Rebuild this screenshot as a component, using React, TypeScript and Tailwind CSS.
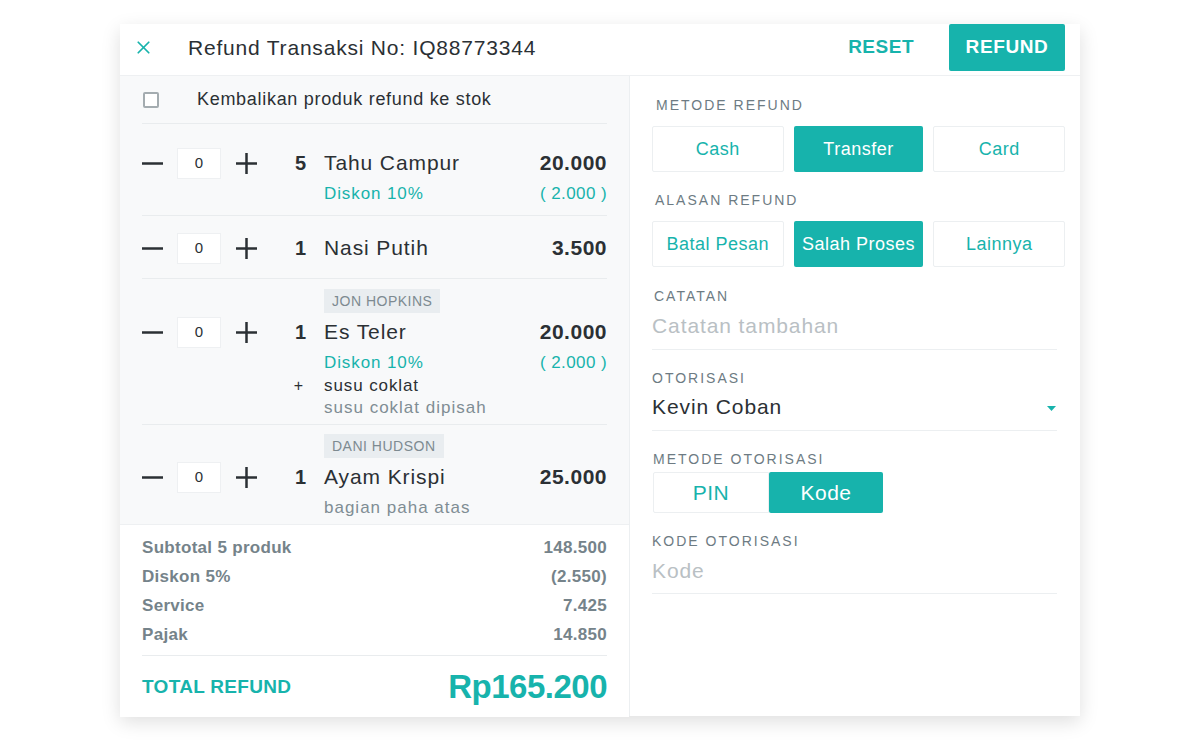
import { X } from 'lucide-react';

const teal = 'text-[#17b3ac]';

type Item = {
    tag?: string;
    qty: number;
    name: string;
    price: string;
    discount?: string;
    addon?: string;
    notes?: string;
    pt: string;
    pb: string;
};

const items: Item[] = [
    { qty: 5, name: 'Tahu Campur', price: '20.000', discount: '( 2.000 )', pt: 'pt-[23px]', pb: 'pb-[9px]' },
    { qty: 1, name: 'Nasi Putih', price: '3.500', pt: 'pt-[16px]', pb: 'pb-[14px]' },
    {
        tag: 'JON HOPKINS',
        qty: 1,
        name: 'Es Teler',
        price: '20.000',
        discount: '( 2.000 )',
        addon: 'susu coklat',
        notes: 'susu coklat dipisah',
        pt: 'pt-[10px]',
        pb: 'pb-[5px]',
    },
    {
        tag: 'DANI HUDSON',
        qty: 1,
        name: 'Ayam Krispi',
        price: '25.000',
        notes: 'bagian paha atas',
        pt: 'pt-[9px]',
        pb: 'pb-[5px]',
    },
];

function Minus() {
    return (
        <svg width="21" height="21" viewBox="0 0 21 21">
            <rect x="0" y="9.25" width="21" height="2.5" fill="#2b3034" />
        </svg>
    );
}

function Plus() {
    return (
        <svg width="21" height="21" viewBox="0 0 21 21">
            <rect x="0" y="9.25" width="21" height="2.5" fill="#2b3034" />
            <rect x="9.25" y="0" width="2.5" height="21" fill="#2b3034" />
        </svg>
    );
}

function ItemRow({ item, last }: { item: Item; last: boolean }) {
    return (
        <div className={`${item.pt} ${item.pb} ${last ? '' : 'border-b border-[#e9ecee]'}`}>
            {item.tag && (
                <div className="flex mb-[3px]">
                    <div className="w-[182px] shrink-0" />
                    <span className="bg-[#e9edf0] text-[#7d8a91] text-[14px] tracking-[0.5px] leading-[24px] px-[8px]">
                        {item.tag}
                    </span>
                </div>
            )}
            <div className="flex items-center h-[32px]">
                <div className="flex items-center w-[164px] shrink-0">
                    <Minus />
                    <div className="ml-[14px] w-[44px] h-[31px] bg-white border border-[#eef0f2] flex items-center justify-center text-[15px] text-[#2b3034]">
                        0
                    </div>
                    <div className="ml-[15px]">
                        <Plus />
                    </div>
                    <span className="ml-auto text-[20px] font-bold text-[#2b3034]">{item.qty}</span>
                </div>
                <span className="ml-[18px] text-[21px] tracking-[0.9px] text-[#2b3034]">{item.name}</span>
                <span className="ml-auto text-[21px] font-bold tracking-[0.5px] text-[#2b3034]">{item.price}</span>
            </div>
            {item.discount && (
                <div className={`flex items-center h-[24px] mt-[3px] text-[17px] tracking-[0.9px] ${teal}`}>
                    <div className="w-[182px] shrink-0" />
                    <span>Diskon 10%</span>
                    <span className="ml-auto tracking-[0.4px]">{item.discount}</span>
                </div>
            )}
            {item.addon && (
                <div className="flex items-center h-[22px] text-[17px] tracking-[0.9px] text-[#2b3034]">
                    <div className="w-[164px] shrink-0 text-right text-[16px] pr-[2px]">+</div>
                    <span className="ml-[18px]">{item.addon}</span>
                </div>
            )}
            {item.notes && (
                <div
                    className={`flex items-center h-[22px] text-[17px] tracking-[1px] text-[#7f8d94] ${
                        item.addon ? '' : 'mt-[4px]'
                    }`}
                >
                    <div className="w-[182px] shrink-0" />
                    <span>{item.notes}</span>
                </div>
            )}
        </div>
    );
}

function Label({ children, className = '' }: { children: string; className?: string }) {
    return (
        <div className={`h-[20px] flex items-center text-[14px] font-medium tracking-[2px] text-[#6d7b83] ${className}`}>
            {children}
        </div>
    );
}

function Segment({ options, active, className = '' }: { options: string[]; active: string; className?: string }) {
    return (
        <div className={`flex gap-[10px] pr-[15px] ${className}`}>
            {options.map((o) => (
                <div
                    key={o}
                    className={`flex-1 h-[46px] rounded-[2px] flex items-center justify-center text-[18px] tracking-[0.5px] ${
                        o === active ? 'bg-[#17b3ac] text-white' : `bg-white border border-[#eceff1] ${teal}`
                    }`}
                >
                    {o}
                </div>
            ))}
        </div>
    );
}

function Field({ value, placeholder }: { value?: string; placeholder?: string }) {
    return (
        <div className="w-[405px] h-[30px] flex items-center">
            {value ? (
                <span className="text-[21px] tracking-[0.9px] text-[#2b3034]">{value}</span>
            ) : (
                <span className="text-[21px] tracking-[0.9px] text-[#b9c0c4]">{placeholder}</span>
            )}
        </div>
    );
}

const summary = [
    ['Subtotal 5 produk', '148.500'],
    ['Diskon 5%', '(2.550)'],
    ['Service', '7.425'],
    ['Pajak', '14.850'],
];

export default function App() {
    return (
        <div className="min-h-screen bg-white pt-[24px]" style={{ fontFamily: '"Liberation Sans", Arial, sans-serif' }}>
            <div className="mx-auto w-[960px] h-[692px] bg-white shadow-[0_6px_18px_rgba(0,0,0,0.13)] flex flex-col">
                <div className="h-[52px] pb-[4px] flex items-center border-b border-[#eef0f2] shrink-0">
                    <X size={21} strokeWidth={2} className="ml-[13px] text-[#17b3ac]" />
                    <span className="ml-[34px] text-[21px] tracking-[0.8px] text-[#2b3034]">
                        Refund Transaksi No: IQ88773344
                    </span>
                    <span className={`ml-auto text-[19px] font-bold tracking-[0.5px] ${teal}`}>RESET</span>
                    <button className="ml-[35px] mr-[15px] w-[116px] h-[47px] rounded-[2px] bg-[#17b3ac] text-white text-[19px] font-bold tracking-[0.6px] self-start">
                        REFUND
                    </button>
                </div>
                <div className="flex flex-1 min-h-0">
                    <div className="w-[510px] border-r border-[#eceff1] flex flex-col shrink-0">
                        <div className="flex-1 bg-[#f8f9fa] px-[22px]">
                            <div className="h-[48px] flex items-center border-b border-[#e9ecee]">
                                <div className="w-[16px] h-[16px] ml-[1px] border-2 border-[#a4acb0] rounded-[2px] bg-white" />
                                <span className="ml-[38px] text-[18px] tracking-[0.7px] text-[#2b3034]">
                                    Kembalikan produk refund ke stok
                                </span>
                            </div>
                            {items.map((it, i) => (
                                <ItemRow key={it.name} item={it} last={i === items.length - 1} />
                            ))}
                        </div>
                        <div className="bg-white px-[22px] pt-[8px] pb-[8px] border-t border-[#eef0f2] shrink-0">
                            {summary.map(([l, v]) => (
                                <div
                                    key={l}
                                    className="h-[29px] flex items-center justify-between text-[17px] font-bold tracking-[0.3px] text-[#75838a]"
                                >
                                    <span>{l}</span>
                                    <span>{v}</span>
                                </div>
                            ))}
                            <div className="mt-[6px] pt-[9px] border-t border-[#e9ecee]">
                                <div className="h-[44px] flex items-center justify-between">
                                    <span className={`text-[19px] font-bold tracking-[0.3px] ${teal}`}>TOTAL REFUND</span>
                                    <span className={`text-[33px] font-bold tracking-[-0.5px] ${teal}`}>Rp165.200</span>
                                </div>
                            </div>
                        </div>
                    </div>
                    <div className="flex-1 pl-[22px] pt-[19px]">
                        <Label className="pl-[4px]">METODE REFUND</Label>
                        <Segment className="mt-[11px]" options={['Cash', 'Transfer', 'Card']} active="Transfer" />
                        <Label className="mt-[18px] pl-[3px]">ALASAN REFUND</Label>
                        <Segment
                            className="mt-[11px]"
                            options={['Batal Pesan', 'Salah Proses', 'Lainnya']}
                            active="Salah Proses"
                        />
                        <Label className="mt-[19px] pl-[2px]">CATATAN</Label>
                        <div className="mt-[5px] pb-[8px] w-[405px] border-b border-[#eceff1]">
                            <Field placeholder="Catatan tambahan" />
                        </div>
                        <Label className="mt-[18px]">OTORISASI</Label>
                        <div className="mt-[4px] pb-[8px] w-[405px] border-b border-[#eceff1] flex items-center">
                            <Field value="Kevin Coban" />
                            <svg width="9" height="5" viewBox="0 0 9 5" className="-ml-[10px] mt-[2px]">
                                <path d="M0 0 H9 L4.5 5 Z" fill="#17b3ac" />
                            </svg>
                        </div>
                        <Label className="mt-[18px] pl-[1px]">METODE OTORISASI</Label>
                        <div className="mt-[3px] flex w-[230px] ml-[1px]">
                            <div
                                className={`flex-1 h-[41px] bg-white border border-[#eceff1] rounded-l-[2px] flex items-center justify-center text-[21px] tracking-[0.5px] ${teal}`}
                            >
                                PIN
                            </div>
                            <div className="flex-1 h-[41px] bg-[#17b3ac] rounded-[2px] flex items-center justify-center text-[21px] tracking-[0.5px] text-white">
                                Kode
                            </div>
                        </div>
                        <Label className="mt-[18px]">KODE OTORISASI</Label>
                        <div className="mt-[5px] pb-[7px] w-[405px] border-b border-[#eceff1]">
                            <Field placeholder="Kode" />
                        </div>
                    </div>
                </div>
            </div>
        </div>
    );
}
